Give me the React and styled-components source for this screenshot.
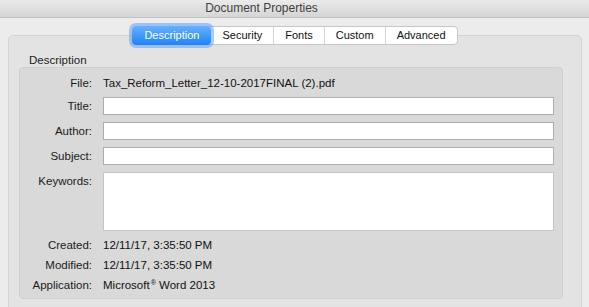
import styled, {createGlobalStyle} from "styled-components";

const GlobalStyle = createGlobalStyle`
  body {
    margin: 0;
    background: #ececec;
    font-family: "Liberation Sans", Arial, sans-serif;
  }
`;

const Window = styled.div`
  width: 589px;
  height: 307px;
  overflow: hidden;
  background: #ececec;
  display: flex;
  flex-direction: column;
`;

const TitleBar = styled.div`
  height: 17px;
  line-height: 17px;
  flex-shrink: 0;
  padding-right: 66px;
  text-align: center;
  font-size: 12px;
  color: #404040;
  background: linear-gradient(#ebebeb, #d5d5d5);
  border-bottom: 1px solid #c2c2c2;
`;

const Body = styled.div`
  padding: 8px 7px 0 8px;
  display: flex;
  flex-direction: column;
`;

const TabRow = styled.div`
  display: flex;
  justify-content: center;
  position: relative;
  z-index: 1;
  margin-bottom: -10px;
`;

const Segmented = styled.div`
  display: flex;
  height: 19px;
  box-sizing: border-box;
  background: #fff;
  border: 1px solid #c6c6c6;
  border-radius: 4px;
`;

const Tab = styled.div`
  padding: 0 11px;
  font-size: 11px;
  line-height: 17px;
  color: ${p => (p.$active ? "#fff" : "#111")};
  border-left: ${p => (p.$divider ? "1px solid #d4d4d4" : "none")};
  ${p => p.$active && `
    margin: -1px 0 -1px -1px;
    padding: 0 12px 0 12px;
    line-height: 19px;
    border-radius: 4px;
    background: linear-gradient(#68b0fb, #1c83fb);
    box-shadow: 0 0 0 3px rgba(98, 160, 246, 0.55);
  `}
`;

const Panel = styled.div`
  height: 300px;
  background: #e3e3e3;
  border: 1px solid #d4d4d4;
  border-radius: 5px;
  padding: 17px 18px 0 10px;
`;

const GroupLabel = styled.div`
  font-size: 11.5px;
  line-height: 14px;
  height: 14px;
  padding-left: 10px;
  color: #222;
`;

const Group = styled.div`
  background: #d9d9d9;
  border: 1px solid #cfcfcf;
  border-radius: 4px;
  padding: 6px 8px 3px 0;
  display: flex;
  flex-direction: column;
`;

const Row = styled.div`
  display: grid;
  grid-template-columns: 72px 1fr;
  column-gap: 11px;
  align-items: ${p => (p.$top ? "start" : "center")};
  min-height: ${p => p.$h || 18}px;
  margin-top: ${p => p.$mt || 0}px;
  font-size: 11.5px;
`;

const Label = styled.div`
  text-align: right;
  color: #1a1a1a;
  line-height: 18px;
`;

const Value = styled.div`
  color: #111;
  white-space: nowrap;
`;

const Reg = styled.span`
  font-size: 7px;
  vertical-align: 4px;
  margin-left: 1px;
`;

const Field = styled.input`
  height: 18px;
  box-sizing: border-box;
  margin: 0;
  padding: 0 3px;
  background: #fff;
  border: 1px solid #adadad;
  border-radius: 0;
  outline: none;
`;

const Area = styled.textarea`
  height: 59px;
  box-sizing: border-box;
  margin: 0;
  padding: 2px 3px;
  resize: none;
  background: #fff;
  border: 1px solid #c4c4c4;
  border-radius: 0;
  outline: none;
`;

const tabs = ["Description", "Security", "Fonts", "Custom", "Advanced"];

const App = () => {
    const active = 0;
    return (
        <Window>
            <GlobalStyle/>
            <TitleBar>Document Properties</TitleBar>
            <Body>
                <TabRow>
                    <Segmented>
                        {tabs.map((t, i) => (
                            <Tab key={t} $active={i === active} $divider={i > active + 1}>{t}</Tab>
                        ))}
                    </Segmented>
                </TabRow>
                <Panel>
                    <GroupLabel>Description</GroupLabel>
                    <Group>
                        <Row>
                            <Label>File:</Label>
                            <Value>Tax_Reform_Letter_12-10-2017FINAL (2).pdf</Value>
                        </Row>
                        <Row $mt={5}>
                            <Label>Title:</Label>
                            <Field defaultValue=""/>
                        </Row>
                        <Row $mt={7}>
                            <Label>Author:</Label>
                            <Field defaultValue=""/>
                        </Row>
                        <Row $mt={7}>
                            <Label>Subject:</Label>
                            <Field defaultValue=""/>
                        </Row>
                        <Row $mt={7} $top>
                            <Label>Keywords:</Label>
                            <Area defaultValue=""/>
                        </Row>
                        <Row $mt={4} $h={20}>
                            <Label>Created:</Label>
                            <Value>12/11/17, 3:35:50 PM</Value>
                        </Row>
                        <Row $h={20}>
                            <Label>Modified:</Label>
                            <Value>12/11/17, 3:35:50 PM</Value>
                        </Row>
                        <Row $h={20}>
                            <Label>Application:</Label>
                            <Value>Microsoft<Reg>®</Reg> Word 2013</Value>
                        </Row>
                    </Group>
                </Panel>
            </Body>
        </Window>
    );
};

export default App;
